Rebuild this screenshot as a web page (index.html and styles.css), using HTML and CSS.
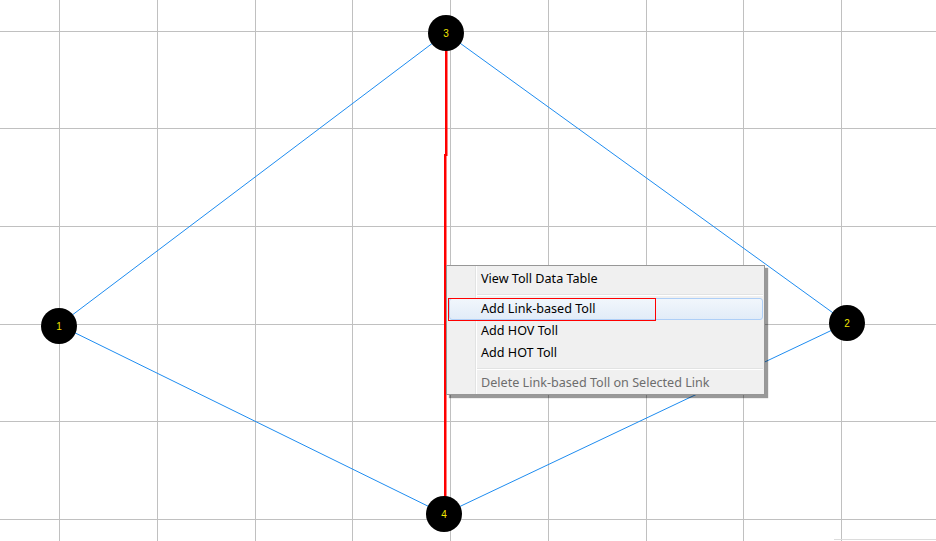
FILE: index.html
```html
<!DOCTYPE html>
<html>
<head>
<meta charset="utf-8">
<link rel="stylesheet" href="styles.css">
</head>
<body>
<div class="canvas">
  <svg class="diagram" width="936" height="541" viewBox="0 0 936 541">
    <g class="grid">
      <line x1="59.5" y1="0" x2="59.5" y2="541"/>
      <line x1="157.5" y1="0" x2="157.5" y2="541"/>
      <line x1="255.5" y1="0" x2="255.5" y2="541"/>
      <line x1="352.5" y1="0" x2="352.5" y2="541"/>
      <line x1="450.5" y1="0" x2="450.5" y2="541"/>
      <line x1="548.5" y1="0" x2="548.5" y2="541"/>
      <line x1="646.5" y1="0" x2="646.5" y2="541"/>
      <line x1="743.5" y1="0" x2="743.5" y2="541"/>
      <line x1="841.5" y1="0" x2="841.5" y2="541"/>
      <line x1="0" y1="31.5" x2="936" y2="31.5"/>
      <line x1="0" y1="128.5" x2="936" y2="128.5"/>
      <line x1="0" y1="226.5" x2="936" y2="226.5"/>
      <line x1="0" y1="324.5" x2="936" y2="324.5"/>
      <line x1="0" y1="421.5" x2="936" y2="421.5"/>
      <line x1="0" y1="519.5" x2="936" y2="519.5"/>
    </g>
    <line class="edge-line" x1="834" y1="539.5" x2="936" y2="539.5"/>
    <g class="links">
      <line x1="59" y1="325" x2="446" y2="33"/>
      <line x1="446" y1="33" x2="847" y2="323"/>
      <line x1="59" y1="325" x2="444" y2="514"/>
      <line x1="444" y1="514" x2="847" y2="323"/>
    </g>
    <rect class="sel" x="445" y="33" width="2.5" height="123"/>
    <rect class="sel" x="444" y="154" width="2.5" height="360"/>
    <g class="nodes">
      <circle cx="59" cy="326" r="18"/>
      <circle cx="847" cy="323" r="18"/>
      <circle cx="446" cy="33" r="18"/>
      <circle cx="444" cy="514" r="18"/>
    </g>
    <g class="labels">
      <text x="59" y="330">1</text>
      <text x="847" y="327">2</text>
      <text x="446" y="37">3</text>
      <text x="444" y="518">4</text>
    </g>
  </svg>

  <div class="menu">
    <div class="item">View Toll Data Table</div>
    <div class="sep"></div>
    <div class="item hot">Add Link-based Toll</div>
    <div class="item">Add HOV Toll</div>
    <div class="item">Add HOT Toll</div>
    <div class="sep"></div>
    <div class="item disabled">Delete Link-based Toll on Selected Link</div>
    <div class="mark"></div>
  </div>
</div>
</body>
</html>
```
FILE: styles.css
```css
html, body {
  margin: 0;
  padding: 0;
  background: #ffffff;
  overflow: hidden;
}

.canvas {
  position: relative;
  width: 936px;
  height: 541px;
  background: #ffffff;
}

.diagram {
  display: block;
}

.grid line {
  stroke: #c0c0c0;
  stroke-width: 1;
}

.edge-line {
  stroke: #dcdcdc;
  stroke-width: 1;
}

.links line {
  stroke: #1e8cf0;
  stroke-width: 1;
}

.sel {
  fill: #ff0000;
}

.nodes circle {
  fill: #000000;
}

.labels text {
  fill: #f2e600;
  font-family: "Liberation Sans", Arial, sans-serif;
  font-size: 10px;
  text-anchor: middle;
}

.menu {
  position: absolute;
  left: 446px;
  top: 265px;
  width: 317px;
  padding-top: 2px;
  border: 1px solid #979797;
  background: linear-gradient(to right, #f0f0f0 28px, #e2e3e3 28px, #e2e3e3 29px, #ffffff 29px, #ffffff 30px, #f0f0f0 30px);
  box-shadow: 3px 3px 1px rgba(0, 0, 0, 0.4);
  font-family: "Noto Sans", "Open Sans", sans-serif;
  font-size: 12.6px;
  color: #000000;
  box-sizing: content-box;
}

.item {
  height: 22px;
  line-height: 22px;
  padding-left: 34px;
  white-space: nowrap;
}

.item.hot {
  margin: 0 1px 0 2px;
  height: 20px;
  line-height: 20px;
  padding-left: 31px;
  border: 1px solid #aecff7;
  border-radius: 3px;
  background: linear-gradient(to bottom, #f1f6fc, #e2ecf8);
}

.item.disabled {
  color: #6d6d6d;
}

.sep {
  height: 8px;
  margin-left: 30px;
  margin-right: 1px;
  background: linear-gradient(to bottom, transparent 4px, #e2e3e3 4px, #e2e3e3 5px, #ffffff 5px, #ffffff 6px, transparent 6px);
}

.mark {
  position: absolute;
  left: 1px;
  top: 32px;
  width: 206px;
  height: 21px;
  border: 1px solid #ff0000;
}
```
